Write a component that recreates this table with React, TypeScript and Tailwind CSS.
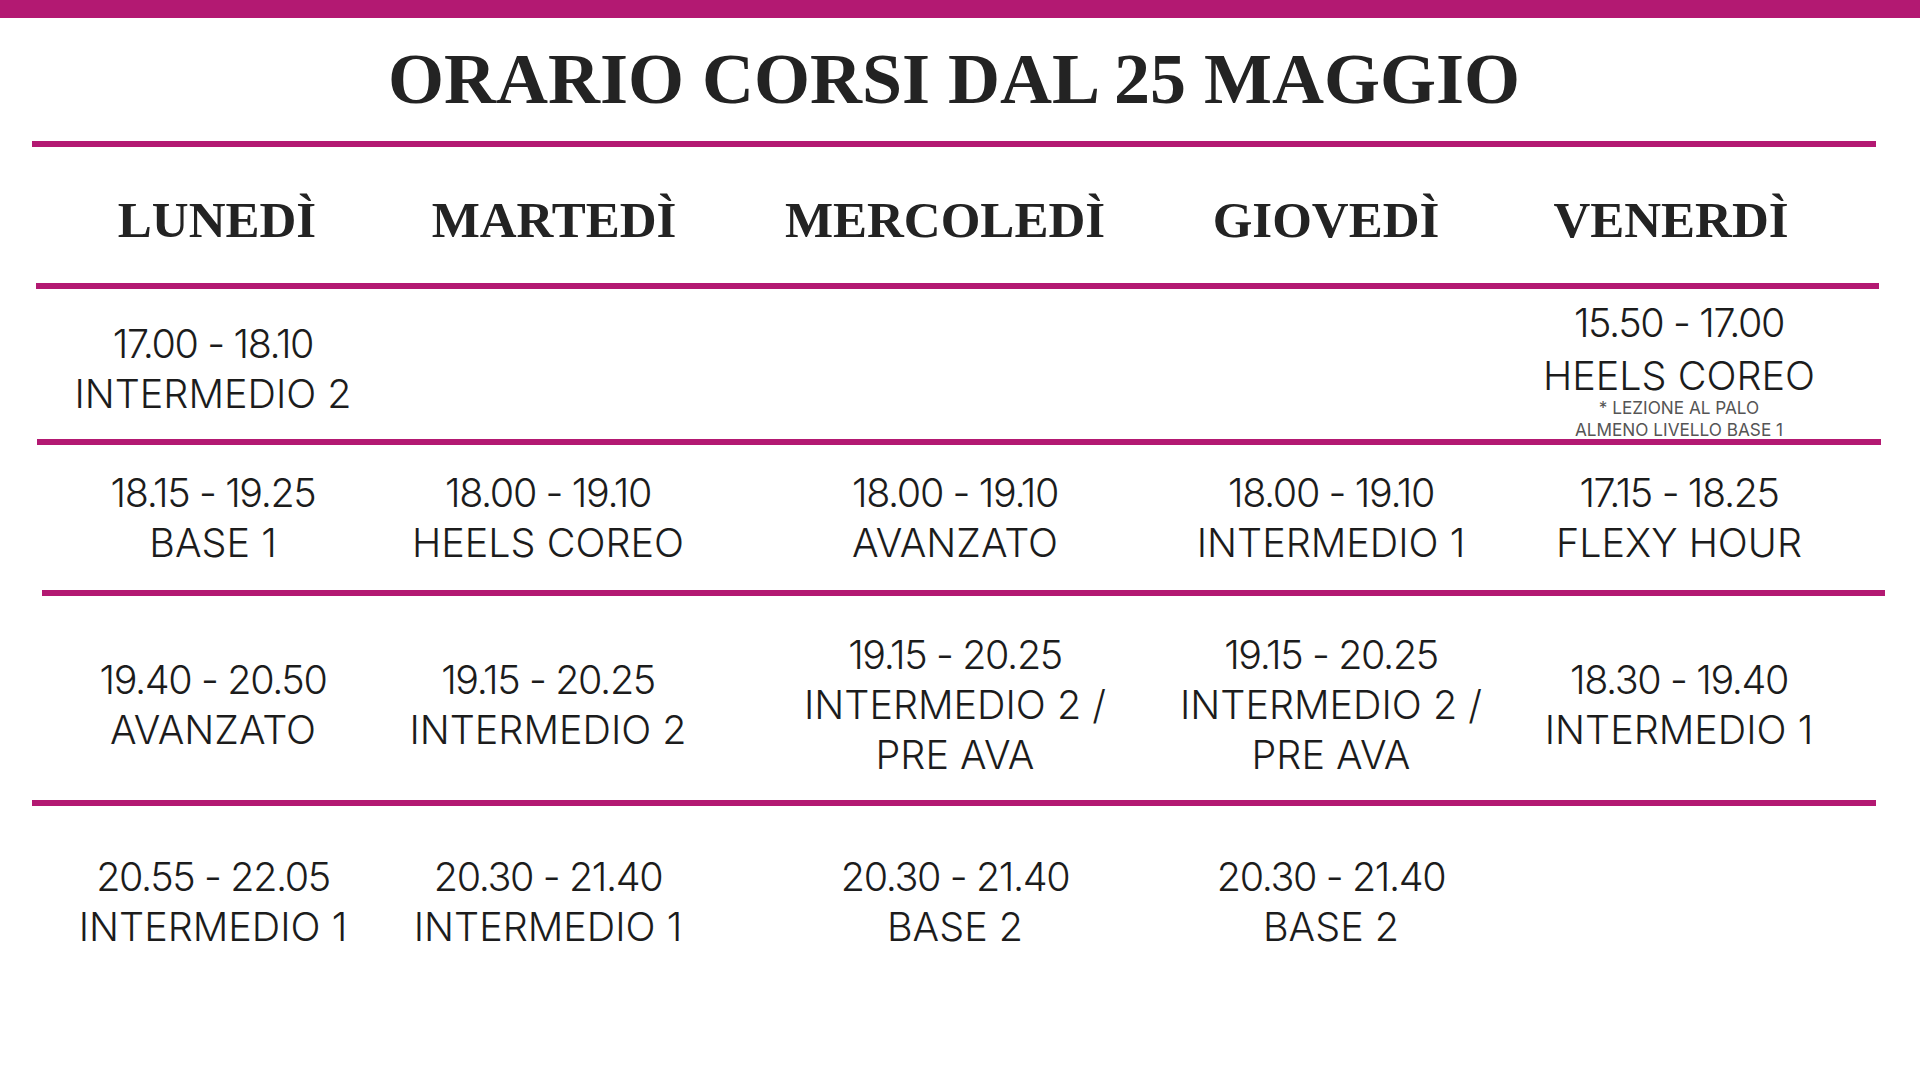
import React from "react";

const M = "bg-[#b31972]";

function Cell({ lines }: { lines: string[] }) {
  return (
    <div className="flex flex-col items-center">
      {lines.map((l, i) => (
        <div
          key={i}
          className={`whitespace-nowrap leading-[50px] h-[50px] ${i === 0 ? "tracking-[-0.035em]" : ""}`}
        >
          {l}
        </div>
      ))}
    </div>
  );
}

const bodyCols = "grid grid-cols-[346px_324px_490px_262px_434px] ml-[40px]";

export default function App() {
  return (
    <div className="w-[1920px] h-[1080px] bg-white overflow-hidden text-[#1c1c1c] font-['Inter',sans-serif] font-light text-[39.5px]">
      <div className={`h-[18px] ${M}`} />
      <h1 className="mt-[25px] h-[72px] text-[72px] leading-[72px] font-bold text-center pr-[12px] text-[#232323] font-['Liberation_Serif',serif]">
        ORARIO CORSI DAL 25 MAGGIO
      </h1>
      <div className={`mt-[26px] ml-[32px] w-[1844px] h-[6px] ${M}`} />

      <div className="grid grid-cols-[354px_320px_462px_300px_390px] ml-[40px] h-[136px] pt-[48px] font-['Liberation_Serif',serif] font-bold text-[51px] leading-[51px] text-[#232323]">
        {["LUNEDÌ", "MARTEDÌ", "MERCOLEDÌ", "GIOVEDÌ", "VENERDÌ"].map((d) => (
          <div key={d} className="flex justify-center whitespace-nowrap h-[51px]">
            {d}
          </div>
        ))}
      </div>
      <div className={`ml-[36px] w-[1843px] h-[6px] ${M}`} />

      <div className={`${bodyCols} h-[150px]`}>
        <div className="pt-[30px]">
          <Cell lines={["17.00 - 18.10", "INTERMEDIO 2"]} />
        </div>
        <div />
        <div />
        <div />
        <div className="pt-[9px] flex flex-col items-center">
          <div className="whitespace-nowrap leading-[50px] h-[50px] tracking-[-0.035em]">15.50 - 17.00</div>
          <div className="whitespace-nowrap leading-[50px] h-[50px] mt-[3px]">HEELS COREO</div>
          <div className="mt-[-4px] text-[17.2px] leading-[21.7px] text-[#555555] font-normal flex flex-col items-center">
            <div className="whitespace-nowrap">* LEZIONE AL PALO</div>
            <div className="whitespace-nowrap">ALMENO LIVELLO BASE 1</div>
          </div>
        </div>
      </div>
      <div className={`ml-[37px] w-[1844px] h-[6px] ${M}`} />

      <div className={`${bodyCols} h-[145px] pt-[23px]`}>
        <Cell lines={["18.15 - 19.25", "BASE 1"]} />
        <Cell lines={["18.00 - 19.10", "HEELS COREO"]} />
        <Cell lines={["18.00 - 19.10", "AVANZATO"]} />
        <Cell lines={["18.00 - 19.10", "INTERMEDIO 1"]} />
        <Cell lines={["17.15 - 18.25", "FLEXY HOUR"]} />
      </div>
      <div className={`ml-[42px] w-[1843px] h-[6px] ${M}`} />

      <div className={`${bodyCols} h-[204px] pt-[14px]`}>
        {[
          ["19.40 - 20.50", "AVANZATO"],
          ["19.15 - 20.25", "INTERMEDIO 2"],
          ["19.15 - 20.25", "INTERMEDIO 2 /", "PRE AVA"],
          ["19.15 - 20.25", "INTERMEDIO 2 /", "PRE AVA"],
          ["18.30 - 19.40", "INTERMEDIO 1"],
        ].map((c, i) => (
          <div key={i} className="flex flex-col justify-center">
            <Cell lines={c} />
          </div>
        ))}
      </div>
      <div className={`ml-[32px] w-[1844px] h-[6px] ${M}`} />

      <div className={`${bodyCols} pt-[46px]`}>
        <Cell lines={["20.55 - 22.05", "INTERMEDIO 1"]} />
        <Cell lines={["20.30 - 21.40", "INTERMEDIO 1"]} />
        <Cell lines={["20.30 - 21.40", "BASE 2"]} />
        <Cell lines={["20.30 - 21.40", "BASE 2"]} />
        <div />
      </div>
    </div>
  );
}
